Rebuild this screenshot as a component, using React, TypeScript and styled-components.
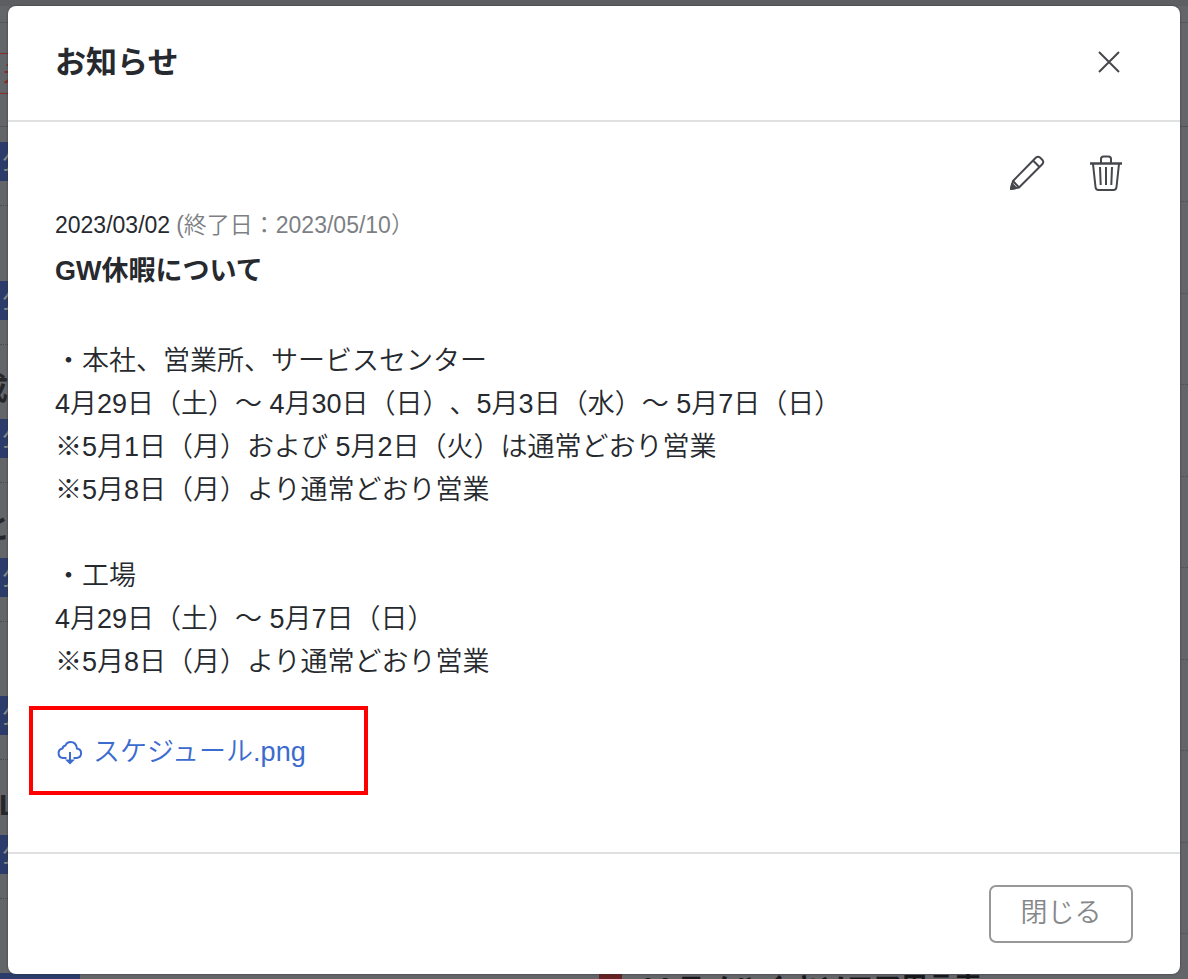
import React from "react";
import styled, { createGlobalStyle } from "styled-components";

const GlobalStyle = createGlobalStyle`
  *, *::before, *::after { box-sizing: border-box; }
  body {
    margin: 0;
    color: #26292e;
    background: #646569;
    font-family: "Liberation Sans", "Noto Sans CJK JP", sans-serif;
    font-size: 27px;
    font-weight: 350;
    line-height: 43px;
    text-spacing-trim: space-all;
  }
  button { font: inherit; color: inherit; cursor: pointer; }
  p, h1, h2 { margin: 0; }
`;

const Shell = styled.div`
  display: grid;
  min-height: 100vh;
  overflow: hidden;
`;

const Underlay = styled.div`
  grid-area: 1 / 1;
  display: flex;
  flex-direction: column;
  height: 100vh;
  overflow: hidden;
  white-space: nowrap;
  border-top: 6px solid #5d5e62;
`;

const TopBar = styled.div`
  flex: none;
  height: 17px;
  border-bottom: 1px solid #55565a;
`;

const Toolbar = styled.div`
  flex: none;
  display: flex;
  align-items: flex-start;
  height: 104px;
  padding-top: 30px;
  border-bottom: 1px solid #515256;
`;

const Tag = styled.span`
  height: 41px;
  margin-left: -10px;
  padding: 0 12px;
  border: 1px solid #8a2a2b;
  border-radius: 12px;
  color: #8a2a2b;
  font-weight: 400;
  line-height: 40px;
`;

const Columns = styled.div`
  display: flex;
`;

const EntryList = styled.div`
  width: 50%;
`;

const Entry = styled.div`
  height: 139px;
  padding-bottom: 24px;
  border-bottom: 1px dotted #4c4d51;
  display: flex;
  flex-direction: column;
  justify-content: flex-end;
  align-items: flex-start;

  &:nth-child(odd) { height: 138px; }
  &:first-child { height: 79px; }
`;

const EntryTitle = styled.span<{ $indent: number }>`
  height: 52px;
  margin-left: ${({ $indent }) => $indent}px;
  color: #26272b;
  font-size: 30px;
  font-weight: 700;
`;

const Badge = styled.span`
  flex: none;
  width: 80px;
  height: 39px;
  padding-left: 2px;
  background: #2b3c6b;
  color: #8a8a8c;
  font-size: 23px;
  font-weight: 400;
  line-height: 39px;
`;

const SideRows = styled.div`
  width: 50%;
`;

const SideRow = styled.div`
  height: 92px;
  border-bottom: 1px dotted #4c4d51;

  &:nth-child(odd) { height: 91px; }
  &:first-child { height: 75px; }
`;

const SideItem = styled.div`
  display: flex;
  gap: 18px;
  padding: 33px 5px 0;
  color: #16171b;
  font-weight: 700;
`;

const Marker = styled.i`
  width: 23px;
  height: 50px;
  background: #642222;
`;

const Layer = styled.div`
  grid-area: 1 / 1;
  z-index: 1;
  display: flex;
  padding: 6px 8px 5px;
`;

const Dialog = styled.section`
  flex: 1;
  display: flex;
  flex-direction: column;
  background: #fff;
  border-radius: 8px;
  box-shadow: 0 0 2px #333;
`;

const Header = styled.header`
  display: flex;
  align-items: center;
  justify-content: space-between;
  height: 116px;
  padding: 0 60px 2px 47px;
  border-bottom: 2px solid #dfe0e1;
`;

const Title = styled.h1`
  font-size: 31px;
  font-weight: 700;
`;

const IconButton = styled.button`
  display: flex;
  padding: 0;
  border: 0;
  background: none;
  color: #45474c;
`;

const Body = styled.div`
  flex: 1;
  padding: 33px 47px 48px;
`;

const Actions = styled.div`
  display: flex;
  justify-content: flex-end;
  gap: 44px;
  padding-right: 10px;
`;

const Dates = styled.p`
  display: flex;
  gap: 6px;
  margin-top: 13px;
  font-size: 23px;
`;

const EndDate = styled.span`
  color: #7d7f84;
`;

const Subject = styled.h2`
  margin: 3px 0 47px;
  font-size: 27px;
  font-weight: 700;
`;

const Message = styled.p`
  white-space: pre-line;
`;

const Attachment = styled.div`
  width: fit-content;
  margin: 22px 0 0 -26px;
  padding: 21px 58px 17px 23px;
  border: 4px solid #f00;
`;

const FileLink = styled.a`
  display: flex;
  align-items: center;
  gap: 9px;
  color: #3c6bd0;
  text-decoration: none;
`;

const Footer = styled.footer`
  display: flex;
  justify-content: flex-end;
  padding: 31px 47px;
  border-top: 2px solid #dfe0e1;
`;

const CloseButton = styled.button`
  width: 144px;
  height: 58px;
  padding: 0 0 2px;
  border: 2px solid #97989a;
  border-radius: 7px;
  background: #fff;
  color: #85878a;
`;

const message = `・本社、営業所、サービスセンター
4月29日（土）～ 4月30日（日）、5月3日（水）～ 5月7日（日）
※5月1日（月）および 5月2日（火）は通常どおり営業
※5月8日（月）より通常どおり営業

・工場
4月29日（土）～ 5月7日（日）
※5月8日（月）より通常どおり営業`;

const entries = [
  { title: "", indent: 0 },
  { title: "", indent: 0 },
  { title: "成", indent: -22 },
  { title: "と", indent: -20 },
  { title: "", indent: 0 },
  { title: "L", indent: -1 },
  { title: "", indent: 0 },
];

const CloseIcon = () => (
  <svg width="22" height="22" viewBox="0 0 22 22" fill="none" stroke="currentColor" strokeWidth="2">
    <path d="M1 1l20 20M21 1L1 21" />
  </svg>
);

const PencilIcon = () => (
  <svg width="36" height="36" viewBox="0 0 36 36" fill="none" stroke="currentColor" strokeWidth="2" strokeLinejoin="round">
    <path d="M2 34l2-8L27 2.500q2-1.500 4 0l2.500 2.500q1.500 2 0 4L10 32.500z" />
    <path d="M24 5.500l6.500 6.500M4 26l6 6.500" />
    <path d="M2 34l1-5 4 4z" fill="currentColor" />
  </svg>
);

const TrashIcon = () => (
  <svg width="34" height="36" viewBox="0 0 34 36" fill="none" stroke="currentColor" strokeWidth="2" strokeLinejoin="round">
    <path d="M1 8.500h32" strokeWidth="2.500" />
    <path d="M12 8V4q0-2.500 2.500-2.500h5Q22 1.500 22 4v4" />
    <path d="M4 9l2.500 23q.3 3 3 3h15q2.700 0 3-3L30 9" />
    <path d="M11 12l.7 18M17 12v18M23 12l-.7 18" />
  </svg>
);

const CloudDownloadIcon = () => (
  <svg width="28" height="28" viewBox="0 0 28 28" fill="none" stroke="currentColor" strokeWidth="2">
    <path d="M10.500 19H7a4.800 4.800 0 0 1-.5-9.500Q7 7 9.500 6.500C10.500 4 12 3 14.500 3c3.500 0 6 2.500 6.500 6.500A4.800 4.800 0 0 1 21 19h-3.500" />
    <path d="M14 13v10" />
    <path d="M9 20.500h10l-5 5z" fill="currentColor" stroke="none" />
  </svg>
);

export default function App() {
  return (
    <>
      <GlobalStyle />
      <Shell>
        <Underlay aria-hidden="true">
          <TopBar />
          <Toolbar><Tag>未</Tag></Toolbar>
          <Columns>
            <EntryList>
              {entries.map(({ title, indent }, i) => (
                <Entry key={i}>
                  {title && <EntryTitle $indent={indent}>{title}</EntryTitle>}
                  <Badge>公</Badge>
                </Entry>
              ))}
            </EntryList>
            <SideRows>
              {Array.from({ length: 9 }, (_, i) => <SideRow key={i} />)}
              <SideItem>
                <Marker />
                <span>14 モノハイ キソロア用言表</span>
              </SideItem>
            </SideRows>
          </Columns>
        </Underlay>
        <Layer>
          <Dialog role="dialog" aria-modal="true" aria-labelledby="dialog-title">
            <Header>
              <Title id="dialog-title">お知らせ</Title>
              <IconButton aria-label="閉じる"><CloseIcon /></IconButton>
            </Header>
            <Body>
              <Actions>
                <IconButton aria-label="編集"><PencilIcon /></IconButton>
                <IconButton aria-label="削除"><TrashIcon /></IconButton>
              </Actions>
              <Dates>
                <span>2023/03/02</span>
                <EndDate>(終了日：2023/05/10）</EndDate>
              </Dates>
              <Subject>GW休暇について</Subject>
              <Message>{message}</Message>
              <Attachment>
                <FileLink href="#schedule">
                  <CloudDownloadIcon />
                  スケジュール.png
                </FileLink>
              </Attachment>
            </Body>
            <Footer>
              <CloseButton>閉じる</CloseButton>
            </Footer>
          </Dialog>
        </Layer>
      </Shell>
    </>
  );
}
